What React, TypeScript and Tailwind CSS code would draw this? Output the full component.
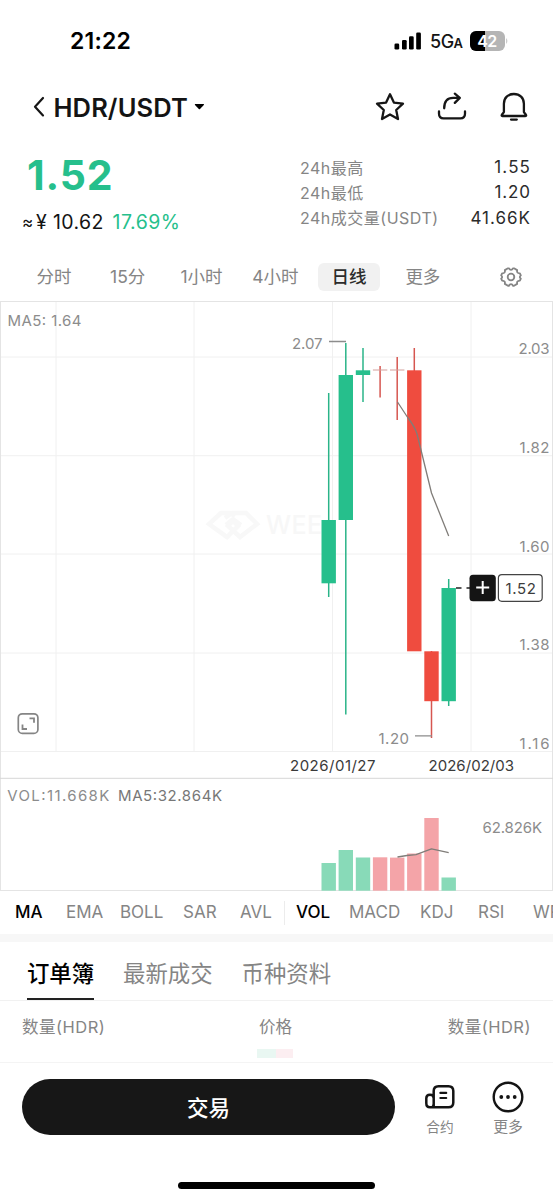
import type { ReactNode } from 'react';

const GREEN = '#26bf8c';
const RED = '#ef4c3f';

type Candle = { x: number; high: number; low: number; top: number; bottom: number; up: boolean; vol: number };

const candles: Candle[] = [
  { x: 328.7, high: 393, low: 597, top: 520, bottom: 583.3, up: true, vol: 863 },
  { x: 345.8, high: 343, low: 714.5, top: 375, bottom: 520, up: true, vol: 850 },
  { x: 363, high: 348, low: 402, top: 370.3, bottom: 375, up: true, vol: 857.5 },
  { x: 380.1, high: 366, low: 397.5, top: 369.5, bottom: 370.5, up: false, vol: 857.3 },
  { x: 397.2, high: 357, low: 420, top: 369.5, bottom: 370.5, up: false, vol: 857.6 },
  { x: 414.3, high: 348, low: 651, top: 370.3, bottom: 651.3, up: false, vol: 853.5 },
  { x: 431.5, high: 651, low: 738, top: 651.3, bottom: 701.2, up: false, vol: 818 },
  { x: 448.7, high: 579, low: 706, top: 588, bottom: 701.2, up: true, vol: 877.5 },
];

const priceLabels: [string, number, number][] = [
  ['2.03', 354, 31],
  ['1.82', 453, 30],
  ['1.60', 551.5, 30],
  ['1.38', 650, 30],
  ['1.16', 748.7, 30],
];

function Label({ x, y, w, fill = '#8c8c8c', size = 15, weight = 400, children }: {
  x: number; y: number; w: number; fill?: string; size?: number; weight?: number; children: ReactNode;
}) {
  return (
    <text x={x} y={y} textLength={w} fontSize={size} fontWeight={weight} fill={fill}>
      {children}
    </text>
  );
}

function Chart() {
  return (
    <svg className="block shrink-0" width="553" height="590" viewBox="0 301 553 590">
      <g stroke="#f0f0f0" strokeWidth="1">
        {[56, 194, 332.5, 471].map((x) => (
          <path key={x} d={`M${x} 302V751`} />
        ))}
        {[357, 455.7, 554, 653, 751.5].map((y) => (
          <path key={y} d={`M0 ${y}H552`} />
        ))}
      </g>
      <g stroke="#e4e4e4" fill="none">
        <path d="M0 301.5H553M0.5 301V891M552.5 301V891M0 890.5H553" />
        <path d="M0 778.3H553" stroke="#d6d6d6" />
      </g>

      <g fill="none" stroke="#f8f8f8" strokeWidth="4.5">
        <path d="M235 516l-5-3h-9l-12 11 18 13 11-11-6-6-6 5" />
        <path d="M225 518l7-5h14l11 11-17 13-12-11 6-6 7 5" />
      </g>
      <text x="266" y="533.5" fontSize="25" fontWeight="500" textLength="56" fill="#f7f7f7">WEE</text>

      {candles.map((c) => {
        const color = c.up ? GREEN : RED;
        const doji = c.bottom - c.top < 2;
        return (
          <g key={c.x}>
            <path d={`M${c.x} ${c.high}V${c.low}`} stroke={c.up ? '#2ab488' : '#d65650'} strokeWidth="1.5" />
            <rect x={c.x - 7.2} y={c.top} width="14.4" height={c.bottom - c.top} fill={doji ? '#d3a09b' : color} />
            <rect x={c.x - 7.2} y={c.vol} width="14.4" height={890.7 - c.vol} fill={c.up ? '#88dab8' : '#f4a4a8'} />
          </g>
        );
      })}

      <g fill="none" stroke="#807d79" strokeWidth="1.3" strokeLinejoin="round">
        <path d="M397.5 402L408 418Q415 427 417 434L421 450 431.5 493 448.7 536" />
        <path d="M397.5 857L407 855.5 416 854.7 431.5 848.8 448.7 852.6" />
        <path d="M329 341.5H346M415 735.8H432" stroke="#8c8c8c" />
      </g>

      <path d="M456 588H461.5M466.5 588H471" stroke="#222" strokeWidth="1.4" />
      <rect x="469.5" y="574.8" width="26.3" height="26.5" rx="3.5" fill="#141414" />
      <path d="M476.2 587.6H489.2M482.7 581.1V594.1" stroke="#fff" strokeWidth="2" />
      <rect x="498.4" y="574.6" width="43.8" height="26.7" rx="3.5" fill="#fff" stroke="#444" strokeWidth="1.2" />
      <Label x={505.5} y={593.7} w={30.5} fill="#3c3c3c">1.52</Label>

      <Label x={7.5} y={325.7} w={74}>MA5: 1.64</Label>
      <Label x={292} y={349.3} w={30.5}>2.07</Label>
      <Label x={378.5} y={743.7} w={30.5}>1.20</Label>
      {priceLabels.map(([t, y, w]) => (
        <Label key={t} x={549.5 - w} y={y} w={w}>{t}</Label>
      ))}
      <Label x={290} y={770.8} w={85.5} fill="#3a3a3a">2026/01/27</Label>
      <Label x={428.5} y={770.8} w={85.5} fill="#3a3a3a">2026/02/03</Label>
      <Label x={7.3} y={800.8} w={102}>VOL:11.668K</Label>
      <Label x={118} y={800.8} w={104} fill="#777">MA5:32.864K</Label>
      <Label x={482.5} y={833} w={59.5}>62.826K</Label>

      <g fill="none" stroke="#858585" strokeWidth="1.7">
        <rect x="18.3" y="713.8" width="19.6" height="19.6" rx="4" />
        <path d="M29.5 718.3H34V722.8M22.5 724.5V729H27" strokeWidth="1.8" />
      </g>
    </svg>
  );
}

function Chip({ children, active }: { children: ReactNode; active?: boolean }) {
  return (
    <div className="flex w-[73.8px] shrink-0 justify-center">
      <span
        className={`flex h-7 items-center rounded-md pt-[2px] whitespace-nowrap ${
          active ? 'w-[62px] justify-center bg-[#f1f1f1] font-medium text-[#2b2b2b]' : 'text-[#858585]'
        }`}
      >
        {children}
      </span>
    </div>
  );
}

const stats: [string, string, string][] = [
  ['24h最高', '1.55', 'tracking-[1.1px]'],
  ['24h最低', '1.20', 'tracking-[0.9px]'],
  ['24h成交量(USDT)', '41.66K', 'tracking-[1px]'],
];

const indicators: [string, string][] = [
  ['MA', 'w-[51px] text-black font-medium'],
  ['EMA', 'w-[54px]'],
  ['BOLL', 'w-[63px]'],
  ['SAR', 'w-[57px]'],
  ['AVL', 'w-[44px]'],
  ['VOL', 'w-[53px] text-black font-medium'],
  ['MACD', 'w-[71px]'],
  ['KDJ', 'w-[58px]'],
  ['RSI', 'w-[55px]'],
  ['WR', 'w-[40px]'],
];

export default function App() {
  return (
    <div className="flex h-[1200px] w-[553px] flex-col overflow-hidden bg-white font-['Inter','Noto_Sans_CJK_SC',sans-serif] text-[#141414]">
      <div className="flex h-[82px] shrink-0 items-center justify-between pr-[43px] pl-[70px]">
        <span className="pt-px text-[23px] font-semibold tracking-[0.2px] text-black">21:22</span>
        <div className="flex items-center">
          <svg width="28" height="18" viewBox="0 0 28 18">
            <rect x="0.5" y="11.5" width="4.7" height="6" rx="1.3" />
            <rect x="8" y="8" width="4.7" height="9.5" rx="1.3" />
            <rect x="15" y="4.3" width="4.7" height="13.2" rx="1.3" />
            <rect x="22.2" y="0.5" width="4.7" height="17" rx="1.3" />
          </svg>
          <span className="ml-[8px] flex w-[33px] items-baseline pt-px text-[18px] font-medium tracking-[-0.5px]">
            5G<span className="text-[13px] font-semibold">A</span>
          </span>
          <svg className="ml-[7px]" width="40" height="20" viewBox="0 0 40 20">
            <rect width="35" height="20" rx="6" fill="#b5b5b5" />
            <path d="M15 0H6a6 6 0 0 0-6 6v8a6 6 0 0 0 6 6h9z" />
            <path d="M36.3 7q2 3 0 6z" fill="#b5b5b5" />
            <text x="17.3" y="15.8" textAnchor="middle" textLength="20" fontSize="16" fontWeight="600" fill="#fff">42</text>
          </svg>
        </div>
      </div>

      <div className="flex h-[50px] shrink-0 items-center pl-[32px]">
        <svg width="16" height="24" viewBox="0 0 16 24" fill="none" stroke="#161616" strokeWidth="2.2" strokeLinecap="round" strokeLinejoin="round">
          <path d="M11 3L3 11.7 11 20.4" />
        </svg>
        <span className="ml-[5.5px] w-[136px] pt-[3px] text-[25.5px] font-semibold tracking-[0.1px] whitespace-nowrap">HDR/USDT</span>
        <svg className="ml-[4px]" width="11" height="8" viewBox="0 0 11 8">
          <path d="M1.2 1h8.4q.8.3.2 1L6 6q-.6.6-1.2 0L1 2q-.6-.7.2-1z" />
        </svg>
        <svg className="mr-[23px] ml-auto shrink-0" width="160" height="34" viewBox="370 90 160 34" fill="none" stroke="#161616" strokeWidth="2.3" strokeLinecap="round" strokeLinejoin="round">
          <path d="M390 94.3l3.9 8.3 9.1 1.1-6.8 6.3 1.8 9-8-4.5-8 4.5 1.8-9-6.8-6.3 9.1-1.1z" />
          <path d="M439 111.5v2.2q0 4.6 4.6 4.6h16.8q4.6 0 4.6-4.6v-2.2" />
          <path d="M444.2 108.3c0-7.2 3.3-10.4 9-10.4h6.3M454.8 93.7l5 4.2-5 5" />
          <path d="M502.3 116h23.2q1-.3.4-1.2l-2-2.7v-8.4c0-6-4.2-9.7-10-9.7s-10 3.7-10 9.7v8.4l-2 2.7q-.6.9.4 1.2zM511 119.6h5.8" />
        </svg>
      </div>

      <div className="flex h-[120px] shrink-0 items-start justify-between pr-[22px] pl-[22px]">
        <div className="flex flex-col">
          <span className="mt-[20px] ml-[5px] text-[41px] leading-[46px] font-bold tracking-[0.8px] text-[#26bf8c]">1.52</span>
          <div className="mt-[13px] flex h-6 items-center text-[19.5px] font-normal whitespace-nowrap">
            <span className="w-[14px] text-[17px]">≈</span>
            <span className="w-[76.5px] tracking-[0.4px]">¥ 10.62</span>
            <span className="tracking-[0.5px] text-[#26bf8c]">17.69%</span>
          </div>
        </div>
        <div className="mt-[23px] flex w-[231px] flex-col">
          {stats.map(([label, value, track]) => (
            <div key={label} className="flex h-[25.3px] items-center justify-between whitespace-nowrap">
              <span className="text-[16px] tracking-[0.5px] text-[#858585]">{label}</span>
              <span className={`text-[17px] text-[#2b2b2b] ${track}`}>{value}</span>
            </div>
          ))}
        </div>
      </div>

      <div className="flex h-[49px] shrink-0 items-center pl-[17px] text-[17.5px]">
        <Chip>分时</Chip>
        <Chip>15分</Chip>
        <Chip>1小时</Chip>
        <Chip>4小时</Chip>
        <Chip active>日线</Chip>
        <Chip>更多</Chip>
        <svg className="ml-[40px] shrink-0" width="22" height="22" viewBox="0 0 24 24" fill="none" stroke="#858585" strokeWidth="2" strokeLinejoin="round">
          <path d="M8.7 2.5h1.2q.7 1.8 2.1 1.8t2.1-1.8h1.2l3.4 2c-.4 2.3.3 3.3 3 3.6l1 2.1c-1.4 1.2-1.4 2.4 0 3.6l-1 2.1c-2.7.3-3.4 1.3-3 3.6l-3.4 2h-1.2q-.7-1.8-2.1-1.8t-2.1 1.8H8.7l-3.4-2c.4-2.3-.3-3.3-3-3.6l-1-2.1c1.4-1.2 1.4-2.4 0-3.6l1-2.1c2.7-.3 3.4-1.3 3-3.6z" />
          <circle cx="12" cy="12" r="3.6" />
        </svg>
      </div>

      <Chart />

      <div className="flex h-[43px] shrink-0 items-center overflow-hidden pl-[15px] text-[17px] text-[#858585]">
        {indicators.map(([name, cls]) => (
          <div key={name} className="contents">
            {name === 'VOL' && <div className="mr-[11px] h-6 w-px shrink-0 bg-[#ececec]" />}
            <span className={`shrink-0 whitespace-nowrap ${cls}`}>{name}</span>
          </div>
        ))}
      </div>

      <div className="h-[8px] shrink-0 bg-[#f7f7f7]" />

      <div className="flex h-[59px] shrink-0 items-stretch gap-[29px] border-b border-[#f1f1f1] pl-[27px] text-[22.4px] text-[#858585]">
        <div className="flex w-[67px] items-center justify-center border-b-2 border-[#222] pt-[7px] font-medium whitespace-nowrap text-black">订单簿</div>
        <div className="flex items-center pt-[5px]">最新成交</div>
        <div className="flex items-center pt-[5px]">币种资料</div>
      </div>

      <div className="flex h-[62px] shrink-0 items-start justify-between border-b border-[#f4f4f4] px-[22px] pt-[14px] text-[16.5px] leading-6 text-[#858585]">
        <span className="w-[90px] tracking-[0.5px]">数量(HDR)</span>
        <div className="flex w-[36px] flex-col items-center pr-[2px]">
          <span className="whitespace-nowrap">价格</span>
          <div className="mt-[10px] mr-[2px] flex h-[9px] w-[36px]">
            <div className="w-[19px] bg-[#e9f7f2]" />
            <div className="w-[17px] bg-[#fceef1]" />
          </div>
        </div>
        <span className="w-[90px] text-right tracking-[0.5px]">数量(HDR)</span>
      </div>

      <div className="flex shrink-0 items-start pt-[16px] pl-[22px]">
        <button className="flex h-[56px] w-[373px] items-center justify-center rounded-full bg-[#171717] pt-[3px] text-[21.5px] font-medium text-white">交易</button>
        <div className="ml-[29px] flex w-8 flex-col items-center">
          <svg width="32" height="34" viewBox="0 0 32 34" fill="none" stroke="#141414" strokeWidth="2.5" strokeLinecap="round" strokeLinejoin="round">
            <path d="M9.7 28.3V12.1q0-4.8 4.8-4.8h10q4.8 0 4.8 4.8v11.4q0 4.8-4.8 4.8H6q-3.7 0-3.7-4v-5q0-3.6 3.7-3.6t3.7 3.6v5.4q0 2-1.4 3.6" />
            <path d="M16.4 13.9h5.8M16.4 19h5.8" strokeWidth="2.2" />
          </svg>
          <span className="mt-[4px] text-[13.7px] leading-5 whitespace-nowrap text-[#858585]">合约</span>
        </div>
        <div className="ml-[36px] flex w-8 flex-col items-center">
          <svg width="32" height="34" viewBox="0 0 32 34" fill="none" stroke="#141414" strokeWidth="2.4">
            <circle cx="16" cy="18" r="14.3" />
            <g fill="#141414" stroke="none">
              <circle cx="9.3" cy="18" r="1.9" />
              <circle cx="16" cy="18" r="1.9" />
              <circle cx="22.7" cy="18" r="1.9" />
            </g>
          </svg>
          <span className="mt-[4px] text-[14.8px] leading-5 whitespace-nowrap text-[#858585]">更多</span>
        </div>
      </div>

      <div className="mt-[45px] ml-[178px] h-[7px] w-[197px] shrink-0 rounded-full bg-black" />
    </div>
  );
}
